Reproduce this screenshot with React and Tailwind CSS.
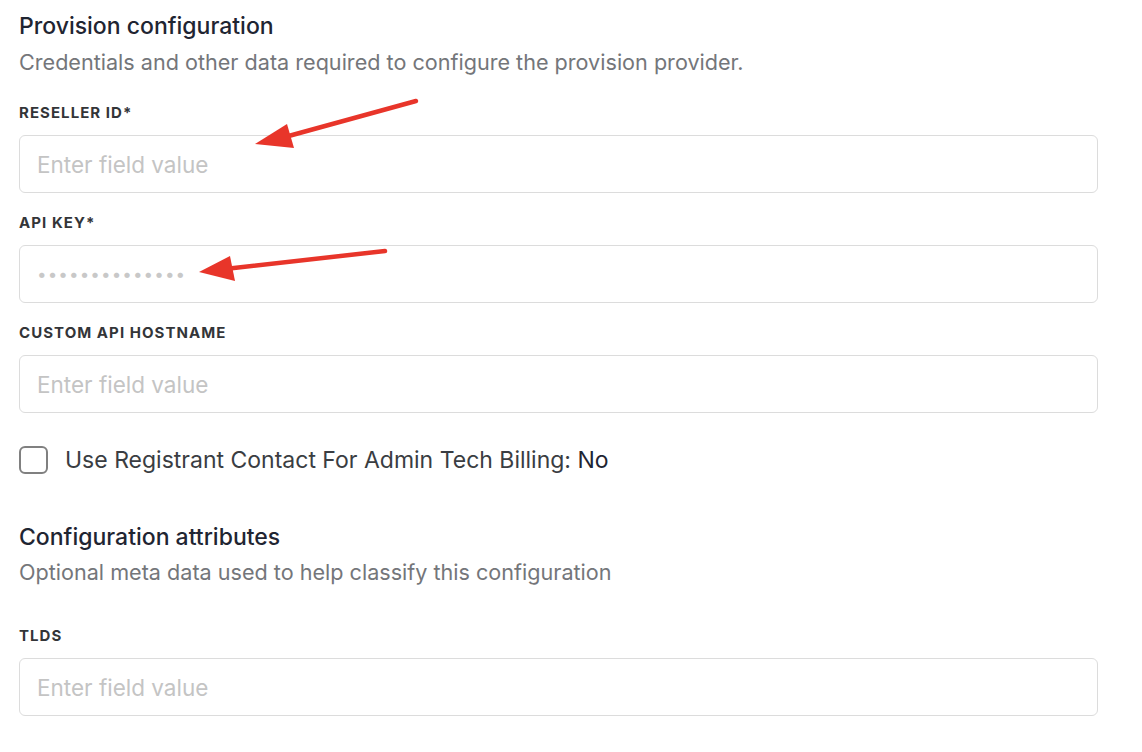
import React from 'react';

const FONT = { fontFamily: 'Inter, "Noto Sans", "Liberation Sans", sans-serif' };

const LABEL_CLASS = 'block text-[15px] leading-[20px] font-bold tracking-[0.07em] uppercase text-[#333538]';
const BOX_CLASS = 'block w-full h-[58px] rounded-[6px] border border-[#dcdcdc] bg-white outline-none focus:border-[#9aa4b2] mt-[12px]';
const TEXT_INPUT = 'px-[17px] text-[22.5px] text-[#1f2532] placeholder:text-[#c4c4c4]';
const SECRET_INPUT = 'pl-[17px] pr-[17px] text-[17px] tracking-[1.1px] text-[#1f2532] placeholder:text-[#c8c8c8]';

function Field({ label, id, first, type = 'text', placeholder = 'Enter field value', inputClass = TEXT_INPUT }) {
  return (
    <div className={first ? '' : 'mt-[20px]'}>
      <label htmlFor={id} className={LABEL_CLASS}>{label}</label>
      <input id={id} type={type} placeholder={placeholder} className={`${BOX_CLASS} ${inputClass}`} />
    </div>
  );
}

function Arrow({ x1, y1, x2, y2, tip, a, b }) {
  return (
    <g>
      <line x1={x1} y1={y1} x2={x2} y2={y2} stroke="#e8352a" strokeWidth="4.5" strokeLinecap="round" />
      <polygon points={`${tip[0]},${tip[1]} ${a[0]},${a[1]} ${b[0]},${b[1]}`} fill="#e8352a" />
    </g>
  );
}

export default function App() {
  return (
    <div className="relative min-h-[752px] bg-white pl-[19px] pr-[44px] pt-[12px]" style={FONT}>
      <section>
        <h2 className="text-[23px] leading-[28px] font-medium text-[#1f2532]">Provision configuration</h2>
        <p className="mt-[8px] text-[21.6px] leading-[28px] text-[#74767a]">
          Credentials and other data required to configure the provision provider.
        </p>

        <div className="mt-[27px]">
          <Field first label="Reseller ID*" id="reseller-id" />
          <Field label="API Key*" id="api-key" placeholder="••••••••••••••" inputClass={SECRET_INPUT} />
          <Field label="Custom API Hostname" id="custom-hostname" />
        </div>

        <label className="mt-[33px] flex items-center gap-[17px] cursor-pointer">
          <input type="checkbox" className="sr-only" />
          <span className="w-[29px] h-[28px] rounded-[6px] border-2 border-[#808080] bg-white" />
          <span className="text-[23px] leading-[28px] text-[#3a3d42]">
            Use Registrant Contact For Admin Tech Billing: <span className="text-[#1f2532]">No</span>
          </span>
        </label>
      </section>

      <section className="mt-[49px]">
        <h2 className="text-[23px] leading-[28px] font-medium text-[#1f2532]">Configuration attributes</h2>
        <p className="mt-[7px] text-[21.6px] leading-[28px] text-[#74767a]">
          Optional meta data used to help classify this configuration
        </p>
        <div className="mt-[40px]">
          <Field first label="TLDs" id="tlds" />
        </div>
      </section>

      <svg className="absolute left-0 top-0 pointer-events-none" width="1142" height="752" viewBox="0 0 1142 752">
        <Arrow x1={416} y1={101} x2={285} y2={137} tip={[255, 144]} a={[287, 124]} b={[294, 148]} />
        <Arrow x1={385} y1={251} x2={225} y2={269} tip={[199, 272]} a={[230, 256]} b={[235, 281]} />
      </svg>
    </div>
  );
}
